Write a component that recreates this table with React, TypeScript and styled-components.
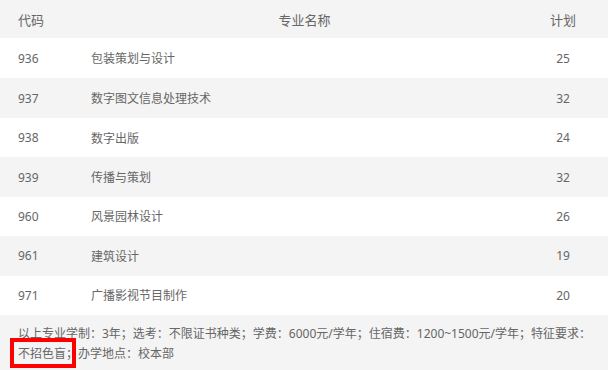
import React from "react";
import styled, { createGlobalStyle } from "styled-components";

const GlobalStyle = createGlobalStyle`
  html, body { margin: 0; padding: 0; background: #ffffff; }
  body { font-family: "Noto Sans", "Noto Sans CJK SC", sans-serif; }
`;

const Table = styled.div`
  width: 608px;
  display: flex;
  flex-direction: column;
  color: #666666;
`;

const Row = styled.div<{ $shade?: boolean; $height: number }>`
  display: grid;
  grid-template-columns: 91px 427px 90px;
  align-items: center;
  height: ${(p) => p.$height}px;
  background: ${(p) => (p.$shade ? "#f4f4f4" : "#ffffff")};
  font-size: 12px;
`;

const HeadRow = styled(Row)`
  font-size: 13px;
`;

const Cell = styled.div<{ $align?: "left" | "center" }>`
  text-align: ${(p) => p.$align || "left"};
  white-space: nowrap;
`;

const CodeCell = styled(Cell)`
  padding-left: 18px;
`;

const Footer = styled.div`
  background: #f4f4f4;
  height: 55px;
  box-sizing: border-box;
  padding: 9px 4px 0 18px;
  font-size: 12px;
  line-height: 20px;
  color: #666666;
`;

const Marked = styled.span`
  position: relative;
  display: inline-block;
  &::after {
    content: "";
    position: absolute;
    left: -8px;
    top: -6px;
    width: 66px;
    height: 30px;
    box-sizing: border-box;
    border: 4px solid #ff0000;
  }
`;

const rows: [string, string, string][] = [
  ["936", "包装策划与设计", "25"],
  ["937", "数字图文信息处理技术", "32"],
  ["938", "数字出版", "24"],
  ["939", "传播与策划", "32"],
  ["960", "风景园林设计", "26"],
  ["961", "建筑设计", "19"],
  ["971", "广播影视节目制作", "20"],
];

export default function App() {
  return (
    <>
      <GlobalStyle />
      <Table>
        <HeadRow $shade $height={38}>
          <CodeCell>代码</CodeCell>
          <Cell $align="center">专业名称</Cell>
          <Cell $align="center">计划</Cell>
        </HeadRow>
        {rows.map(([code, name, plan], i) => (
          <Row key={code} $shade={i % 2 === 1} $height={i < 2 ? 40 : 39.4}>
            <CodeCell>{code}</CodeCell>
            <Cell>{name}</Cell>
            <Cell $align="center">{plan}</Cell>
          </Row>
        ))}
        <Footer>
          以上专业学制：3年；选考：不限证书种类；学费：6000元/学年；住宿费：1200~1500元/学年；特征要求：
          <Marked>不招色盲；</Marked>办学地点：校本部
        </Footer>
      </Table>
    </>
  );
}
